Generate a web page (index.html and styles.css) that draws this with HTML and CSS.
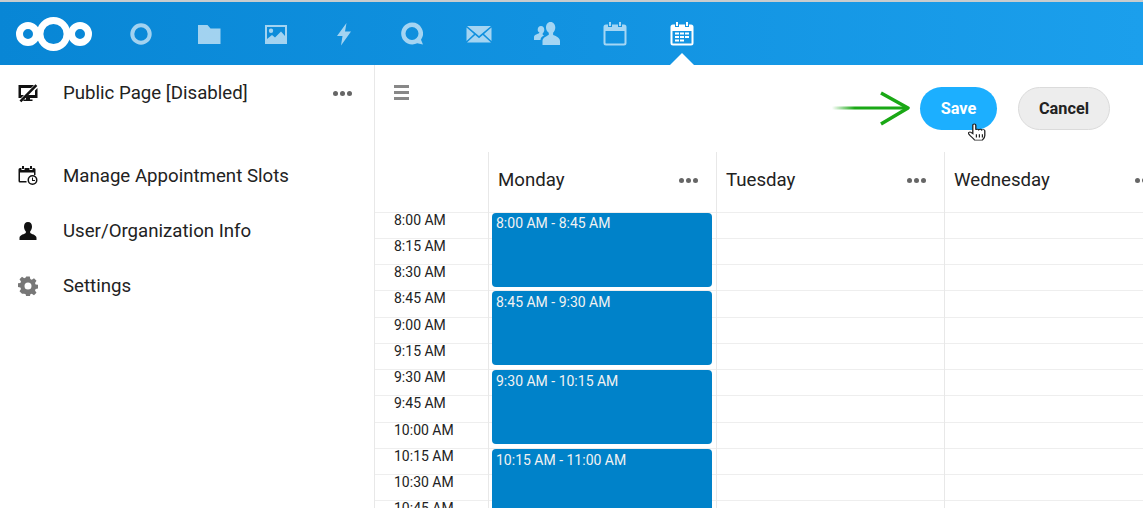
FILE: index.html
```html
<!DOCTYPE html>
<html>
    <head>
        <meta charset="utf-8" />
        <title>Appointments</title>
        <link rel="stylesheet" href="styles.css">
    </head>
    <body>
        <header class="top_bar">
            <svg class="logo" width="80" height="36" viewBox="0 0 80 36">
                <g fill="none" stroke="#fff">
                    <circle cx="12" cy="18" r="8.500" stroke-width="7"/>
                    <circle cx="37.500" cy="18" r="13.500" stroke-width="6.800"/>
                    <circle cx="64" cy="18" r="8.500" stroke-width="7"/>
                </g>
            </svg>
            <nav class="app_nav">
                <a class="app_icon">
                    <svg width="24" height="24" viewBox="0 0 24 24"><circle cx="12" cy="12" r="8.700" fill="none" stroke="#fff" stroke-width="4"/></svg>
                </a>
                <a class="app_icon">
                    <svg width="24" height="24" viewBox="0 0 24 24"><path fill="#fff" d="M1 3h9.500l3 3.500H23.500V22H1z"/></svg>
                </a>
                <a class="app_icon">
                    <svg width="24" height="24" viewBox="0 0 24 24"><path fill="#fff" fill-rule="evenodd" d="M1 3h22v19H1zM3 5v12l5-4 3 2.500 6-6 4 4.500V5zM7 6.500a2.200 2.200 0 1 1 0 4.400 2.200 2.200 0 0 1 0-4.400z"/></svg>
                </a>
                <a class="app_icon">
                    <svg width="24" height="24" viewBox="0 0 24 24"><path fill="#fff" d="M14.500 1 5 14h5.500L9 23.500 19 9.500h-6z"/></svg>
                </a>
                <a class="app_icon">
                    <svg width="24" height="24" viewBox="0 0 24 24"><path fill="#fff" fill-rule="evenodd" d="M12 .5a11 11 0 0 1 9 17.300l2 4.700-5.800-1.200A11 11 0 1 1 12 .5zm0 4.500a6.500 6.500 0 1 0 0 13 6.500 6.500 0 0 0 0-13z"/></svg>
                </a>
                <a class="app_icon">
                    <svg width="26" height="24" viewBox="0 0 26 24"><path fill="#fff" d="M1 4h24L13 14zM0.500 5.500 8 12 .5 19zM25.500 5.500 18 12l7.500 7zM9.200 13l3.800 3.200L16.800 13l8.200 7.500H1z"/></svg>
                </a>
                <a class="app_icon">
                    <svg width="26" height="24" viewBox="0 0 26 24"><path fill="#fff" d="M16.500 0c3 0 4.800 2.500 4.800 5.500 0 2.200-1 4-2.200 5.200v2c1 1 6.900 2 6.900 6.300v4H8.500v-4c0-3.500 4.700-5 6.300-6.300v-2C13 9.500 12 7.700 12 5.500 12 2.500 13.500 0 16.500 0zM7 4c2 0 3.300 1.600 3.300 3.700 0 1.500-.7 2.800-1.600 3.600v1.400c.4.300 1 .6 1.500.9-2.300 1-3.700 2.500-3.700 4.400H0v-3c0-2.300 3.700-2.900 5.200-4v-1.200C4.300 10.300 3.700 9 3.700 7.700 3.700 5.600 5 4 7 4z"/></svg>
                </a>
                <a class="app_icon">
                    <svg width="24" height="24" viewBox="0 0 24 24"><path fill="#fff" fill-rule="evenodd" d="M6 0h2v4H6zM16 0h2v4h-2zM3 2.500h2V5h4V2.500h6V5h4V2.500h2A2.500 2.500 0 0 1 23.500 5v16a2.500 2.500 0 0 1-2.500 2.500H3A2.500 2.500 0 0 1 .5 21V5A2.500 2.500 0 0 1 3 2.500zM2.500 9v12c0 .3.200.5.500.5h18c.3 0 .5-.2.500-.5V9z"/></svg>
                </a>
                <a class="app_icon active">
                    <svg width="24" height="24" viewBox="0 0 24 24"><path fill="#fff" fill-rule="evenodd" d="M6 0h2v4H6zM16 0h2v4h-2zM3 2.500h2V5h4V2.500h6V5h4V2.500h2A2.500 2.500 0 0 1 23.500 5v16a2.500 2.500 0 0 1-2.500 2.500H3A2.500 2.500 0 0 1 .5 21V5A2.500 2.500 0 0 1 3 2.500zM2.500 9v12.500h19V9zM5 10.500h4v2H5zM10 10.500h4v2h-4zM15 10.500h4v2h-4zM5 14h4v2H5zM10 14h4v2h-4zM15 14h4v2h-4zM5 17.500h4v2H5zM10 17.500h4v2h-4z"/></svg>
                </a>
            </nav>
        </header>

        <div class="page">
            <aside class="sidebar">
                <div class="side_item public_item">
                    <svg class="side_icon" width="20" height="20" viewBox="0 0 20 20"><path fill="#111" fill-rule="evenodd" d="M.5 2H16l-3 3H3v7h3l-3 3H.5zM19.500 5v10H12v1.500h2.500V18h-9v-1.500H8V15H7.500l3-3H17V7.500zM1.500 17.500 17.500 1.200l1.800 1.800L3.300 19.300z"/></svg>
                    <span class="side_label">Public Page [Disabled]</span>
                    <span class="dots"><i></i><i></i><i></i></span>
                </div>
                <div class="side_item">
                    <svg class="side_icon" width="20" height="20" viewBox="0 0 20 20"><path fill="#111" fill-rule="evenodd" d="M4 0h2v3H4zM12 0h2v3h-2zM2 2h1.500v2h3V2h5v2h3V2H16a1.500 1.500 0 0 1 1.500 1.500V9H16V6.500H2V15h6.500v1.500H2A1.500 1.500 0 0 1 .5 15V3.500A1.500 1.500 0 0 1 2 2zM14.500 9a5 5 0 1 1 0 10 5 5 0 0 1 0-10zm0 1.500a3.500 3.500 0 1 0 0 7 3.500 3.500 0 0 0 0-7zM14 11.500h1v2.600h2v1h-3z"/></svg>
                    <span class="side_label">Manage Appointment Slots</span>
                </div>
                <div class="side_item">
                    <svg class="side_icon" width="20" height="20" viewBox="0 0 20 20"><path fill="#111" d="M10 1c2.600 0 4 2.100 4 4.700 0 1.900-.8 3.500-1.800 4.500v1.700c.8 1 6.300 1.700 6.300 4.800V19h-17v-2.300c0-3.100 5.500-3.800 6.300-4.800v-1.700C6.800 9.200 6 7.600 6 5.700 6 3.100 7.400 1 10 1z"/></svg>
                    <span class="side_label">User/Organization Info</span>
                </div>
                <div class="side_item">
                    <svg class="side_icon" width="20" height="20" viewBox="0 0 20 20"><path fill="#777" fill-rule="evenodd" d="M8.200 .5h3.600l.5 2.600 1.500.6 2.200-1.500 2.500 2.500-1.500 2.200.6 1.500 2.600.5v3.600l-2.600.5-.6 1.500 1.500 2.200-2.500 2.500-2.200-1.500-1.500.6-.5 2.600H8.200l-.5-2.600-1.500-.6L4 17.700l-2.500-2.500L3 13l-.6-1.500-2.600-.5V7.400l2.600-.5L3 5.400 1.500 3.200 4 .7l2.200 1.500 1.500-.6zM10 6.500a3.500 3.500 0 1 0 0 7 3.500 3.500 0 0 0 0-7z"/></svg>
                    <span class="side_label">Settings</span>
                </div>
            </aside>

            <main class="content">
                <div class="toolbar">
                    <div class="hamburger"><i></i><i></i><i></i></div>
                    <svg class="green_arrow" width="84" height="38" viewBox="0 0 84 38">
                        <defs>
                            <linearGradient id="arrow_tail" x1="0" x2="1" y1="0" y2="0">
                                <stop offset="0" stop-color="#1aa815" stop-opacity="0"/>
                                <stop offset=".3" stop-color="#1aa815"/>
                            </linearGradient>
                        </defs>
                        <rect x="0" y="17.500" width="76" height="3" fill="url(#arrow_tail)"/>
                        <path d="M49 4 76 19 49 35" fill="none" stroke="#1aa815" stroke-width="3.500" stroke-linejoin="round"/>
                    </svg>
                    <button class="btn btn_save">Save
                        <svg class="hand_cursor" width="18" height="18" viewBox="1 0 15 21" preserveAspectRatio="none"><path fill="#fff" stroke="#222" stroke-width="1.100" d="M5 2.500c0-1.800 2.500-1.800 2.500 0V8c.5-1 2.200-1 2.500 0 .5-.9 2.200-.9 2.500.2.600-.8 2.400-.6 2.500.8v5.500c0 2.500-1.500 4.500-2 5.500H6.500C5.500 18 3 15.500 1.500 12.500c-.7-1.500 1-2.500 2-1.500L5 12.500z"/><path stroke="#222" d="M8 13v4M10.500 13v4M13 13v4"/></svg>
                    </button>
                    <button class="btn btn_cancel">Cancel</button>
                </div>

                <div class="calendar">
                    <div class="time_col">
                        <div class="col_head"></div>
                        <div class="time_row">8:00 AM</div>
                        <div class="time_row">8:15 AM</div>
                        <div class="time_row">8:30 AM</div>
                        <div class="time_row">8:45 AM</div>
                        <div class="time_row">9:00 AM</div>
                        <div class="time_row">9:15 AM</div>
                        <div class="time_row">9:30 AM</div>
                        <div class="time_row">9:45 AM</div>
                        <div class="time_row">10:00 AM</div>
                        <div class="time_row">10:15 AM</div>
                        <div class="time_row">10:30 AM</div>
                        <div class="time_row">10:45 AM</div>
                    </div>
                    <div class="day_col">
                        <div class="col_head"><span>Monday</span><span class="dots"><i></i><i></i><i></i></span></div>
                        <div class="day_body">
                            <div class="day_lines">
                                <div></div><div></div><div></div><div></div><div></div><div></div>
                                <div></div><div></div><div></div><div></div><div></div><div></div>
                            </div>
                            <div class="day_slots">
                                <div class="slot">8:00 AM - 8:45 AM</div>
                                <div class="slot">8:45 AM - 9:30 AM</div>
                                <div class="slot">9:30 AM - 10:15 AM</div>
                                <div class="slot">10:15 AM - 11:00 AM</div>
                            </div>
                        </div>
                    </div>
                    <div class="day_col">
                        <div class="col_head"><span>Tuesday</span><span class="dots"><i></i><i></i><i></i></span></div>
                        <div class="day_body">
                            <div class="day_lines">
                                <div></div><div></div><div></div><div></div><div></div><div></div>
                                <div></div><div></div><div></div><div></div><div></div><div></div>
                            </div>
                        </div>
                    </div>
                    <div class="day_col">
                        <div class="col_head"><span>Wednesday</span><span class="dots"><i></i><i></i><i></i></span></div>
                        <div class="day_body">
                            <div class="day_lines">
                                <div></div><div></div><div></div><div></div><div></div><div></div>
                                <div></div><div></div><div></div><div></div><div></div><div></div>
                            </div>
                        </div>
                    </div>
                </div>
            </main>
        </div>
    </body>
</html>
```

FILE: styles.css
```css
html, body {
    width: 100%;
    height: 100%;
    margin: 0;
    overflow: hidden;
}

body {
    display: flex;
    flex-direction: column;
    background-color: #fff;
    color: #222;
    font-family: Roboto, "Liberation Sans", sans-serif;
}

.top_bar {
    position: relative;
    display: flex;
    align-items: center;
    flex: none;
    height: 63px;
    border-top: 2px solid #c8ccce;
    background: linear-gradient(to right, #0886d5 0%, #1b9fec 100%);
}

.logo {
    margin-left: 16px;
    flex: none;
}

.app_nav {
    display: flex;
    margin-left: 11px;
}

.app_icon {
    position: relative;
    display: flex;
    align-items: center;
    justify-content: center;
    width: 67.7px;
    height: 63px;
    opacity: 0.62;
}

.app_icon.active {
    opacity: 1;
}

.app_icon.active::after {
    content: "";
    position: absolute;
    left: 50%;
    bottom: 0;
    margin-left: -12px;
    border-left: 12px solid transparent;
    border-right: 12px solid transparent;
    border-bottom: 12px solid #fff;
}

.page {
    display: flex;
    flex: 1;
    min-height: 0;
}

.sidebar {
    flex: none;
    box-sizing: border-box;
    width: 375px;
    padding-top: 2px;
    border-right: 1px solid #e8e8e8;
}

.side_item {
    display: flex;
    align-items: center;
    height: 55px;
    padding-left: 18px;
    font-size: 18.67px;
}

.public_item {
    height: 52px;
    margin-bottom: 29px;
    padding-right: 22px;
}

.side_icon {
    flex: none;
    margin-right: 25px;
}

.side_label {
    flex: 1;
}

.dots {
    display: flex;
    gap: 2px;
}

.dots i {
    width: 5px;
    height: 5px;
    border-radius: 50%;
    background-color: #666;
}

.content {
    flex: 1;
    min-width: 0;
}

.toolbar {
    position: relative;
    display: flex;
    align-items: flex-start;
    box-sizing: border-box;
    height: 87px;
    padding: 22px 33px 0 19px;
}

.hamburger {
    display: flex;
    flex-direction: column;
    gap: 3px;
    margin-top: -2px;
    margin-right: auto;
}

.hamburger i {
    width: 15px;
    height: 3px;
    background-color: #888;
}

.green_arrow {
    position: absolute;
    left: 457px;
    top: 24px;
    filter: blur(0.4px);
}

.btn {
    position: relative;
    box-sizing: border-box;
    height: 43px;
    border-radius: 22px;
    font-family: inherit;
    font-size: 16.3px;
    font-weight: bold;
}

.btn_save {
    width: 77px;
    margin-right: 21px;
    border: none;
    background-color: #1cafff;
    color: #fff;
}

.btn_cancel {
    width: 92px;
    border: 1px solid #dbdbdb;
    background-color: #ededed;
    color: #222;
}

.hand_cursor {
    position: absolute;
    left: 48px;
    top: 36px;
}

.calendar {
    display: flex;
}

.time_col {
    flex: none;
    width: 113px;
}

.col_head {
    display: flex;
    align-items: center;
    justify-content: space-between;
    box-sizing: border-box;
    height: 59.6px;
    padding: 0 18px 3px 9px;
    font-size: 18.67px;
}

.time_row {
    box-sizing: border-box;
    height: 26.25px;
    padding: 0 0 0 19px;
    border-top: 1px solid #eee;
    font-size: 14px;
    line-height: 14px;
}

.day_col {
    flex: none;
    box-sizing: border-box;
    width: 228px;
    border-left: 1px solid #e8e8e8;
}

.day_body {
    display: grid;
    height: 300px;
}

.day_lines, .day_slots {
    grid-area: 1 / 1;
    min-width: 0;
}

.day_lines div {
    box-sizing: border-box;
    height: 26.25px;
    border-top: 1px solid #eee;
}

.day_slots {
    display: flex;
    flex-direction: column;
    gap: 4.8px;
    padding: 1px 4px 0 3px;
}

.slot {
    flex: none;
    box-sizing: border-box;
    height: 74px;
    padding: 2.6px 4px;
    border-radius: 4px;
    background-color: #0082c9;
    color: #f2f2f2;
    font-size: 14px;
    line-height: 16px;
}
```
